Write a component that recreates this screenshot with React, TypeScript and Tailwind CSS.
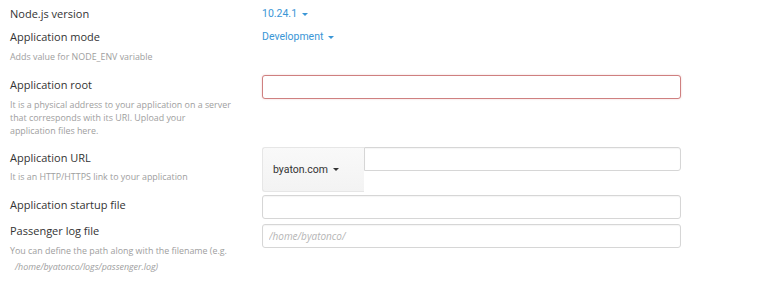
const caret = (
  <span className="ml-[5px] inline-block h-0 w-0 border-x-[3px] border-t-[3px] border-x-transparent border-t-current align-middle" />
);

export default function App() {
  const label = "text-[11px] leading-[16px] text-[#333]";
  const desc = "text-[8.9px] leading-[13px] text-[#9e9e9e]";
  const input =
    "h-[24px] w-full rounded-[3px] border bg-white px-[6px] text-[10px] outline-none";
  const normal = "border-[#d6d6d6] shadow-[inset_0_1px_1px_rgba(0,0,0,0.04)]";

  return (
    <div
      className="min-h-[295px] w-[768px] bg-white pl-[10px] pt-[6px]"
      style={{ fontFamily: '"Open Sans", "Liberation Sans", sans-serif' }}
    >
      {/* Node.js version */}
      <div className="flex h-[23px]">
        <div className="w-[252px]">
          <div className={label}>Node.js version</div>
        </div>
        <div className="text-[10.5px] leading-[16px] text-[#3a96d6]" style={{ fontFamily: "Roboto, sans-serif" }}>
          10.24.1
          {caret}
        </div>
      </div>

      {/* Application mode */}
      <div className="flex">
        <div className="w-[252px]">
          <div className={label}>Application mode</div>
          <div className={`${desc} mt-[5px]`}>Adds value for NODE_ENV variable</div>
        </div>
        <div className="text-[10.5px] leading-[16px] text-[#3a96d6]" style={{ fontFamily: "Roboto, sans-serif" }}>
          Development
          {caret}
        </div>
      </div>

      {/* Application root */}
      <div className="mt-[10px] flex">
        <div className="w-[252px] pt-[4px]">
          <div className={label}>Application root</div>
          <div className={`${desc} mt-[5px]`}>
            It is a physical address to your application on a server
            <br />
            that corresponds with its URI. Upload your
            <br />
            application files here.
          </div>
        </div>
        <div className="w-[419px]">
          <input className={`${input} border-[#cf8080] shadow-[0_0_2px_rgba(200,80,80,0.3)]`} />
        </div>
      </div>

      {/* Application URL */}
      <div className="mt-[10px] flex">
        <div className="w-[252px] pt-[3px]">
          <div className={label}>Application URL</div>
          <div className={`${desc} mt-[4px]`}>It is an HTTP/HTTPS link to your application</div>
        </div>
        <div className="flex w-[419px] items-start">
          <div
            className="flex h-[45px] w-[102px] items-center rounded-l-[3px] border border-r-0 border-[#e6e6e6] bg-gradient-to-b from-[#f9f9f9] to-[#f3f3f3] pl-[10px] text-[10.5px] text-[#333]"
            style={{ fontFamily: "Roboto, sans-serif" }}
          >
            byaton.com
            {caret}
          </div>
          <input className={`${input} ${normal} flex-1 rounded-l-none`} />
        </div>
      </div>

      {/* Application startup file */}
      <div className="mt-[1px] flex">
        <div className="w-[252px] pt-[4px]">
          <div className={label}>Application startup file</div>
        </div>
        <div className="w-[419px]">
          <input className={`${input} ${normal}`} />
        </div>
      </div>

      {/* Passenger log file */}
      <div className="mt-[3px] flex">
        <div className="w-[252px] pt-[1px]">
          <div className={label}>Passenger log file</div>
          <div className={`${desc} mt-[5px]`}>
            You can define the path along with the filename (e.g.
          </div>
          <div className={`${desc} mt-[3px] pl-[5px] italic`}>/home/byatonco/logs/passenger.log)</div>
        </div>
        <div className="w-[419px]">
          <input
            className={`${input} ${normal} h-[23px] italic placeholder:text-[#b5b5b5]`}
            placeholder="/home/byatonco/"
          />
        </div>
      </div>
    </div>
  );
}
